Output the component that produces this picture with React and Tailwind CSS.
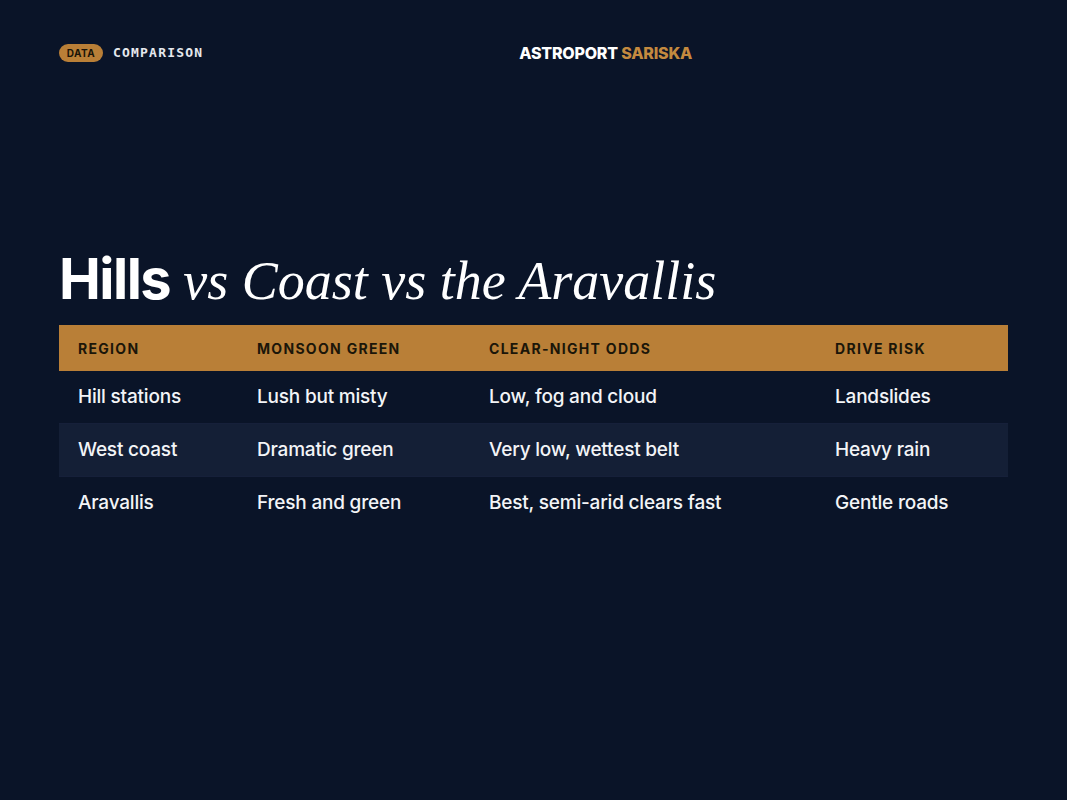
const rows = [
  ["Hill stations", "Lush but misty", "Low, fog and cloud", "Landslides"],
  ["West coast", "Dramatic green", "Very low, wettest belt", "Heavy rain"],
  ["Aravallis", "Fresh and green", "Best, semi-arid clears fast", "Gentle roads"],
];

const App = () => {
  return (
    <div
      className="w-[1067px] h-[800px] bg-[#0a1428] text-white px-[59px] flex flex-col"
      style={{ fontFamily: "Inter, 'Noto Sans', sans-serif" }}
    >
      {/* Top bar */}
      <div className="flex items-center justify-between pt-[41px]">
        <div className="flex items-center gap-[10px]">
          <span className="h-[18px] w-[44px] rounded-full bg-[#b97f37] text-[#1a1408] text-[10px] font-bold tracking-[0.5px] flex items-center justify-center">
            DATA
          </span>
          <span
            className="text-[13px] font-bold tracking-[1.2px] text-[#e6e8ee]"
            style={{ fontFamily: "'DejaVu Sans Mono', 'Liberation Mono', monospace" }}
          >
            COMPARISON
          </span>
        </div>
        <div className="text-[16px] font-extrabold tracking-[-0.2px]">
          ASTROPORT <span className="text-[#c48a3f]">SARISKA</span>
        </div>
        <div />
      </div>

      {/* Title */}
      <h1 className="mt-[186px] flex items-baseline gap-[13px] leading-none">
        <span className="text-[56px] font-bold tracking-[-1.5px]">Hills</span>
        <span
          className="text-[54px] italic"
          style={{ fontFamily: "'Liberation Serif', 'DejaVu Serif', serif" }}
        >
          vs Coast vs the Aravallis
        </span>
      </h1>

      {/* Table */}
      <div className="mt-[17px] w-[949px]">
        <div className="grid grid-cols-[179px_232px_346px_192px] h-[46px] items-center bg-[#b97f37] text-[#1b1609] text-[14px] font-bold tracking-[1.3px]">
          <div className="pl-[19px]">REGION</div>
          <div className="pl-[19px]">MONSOON GREEN</div>
          <div className="pl-[19px]">CLEAR-NIGHT ODDS</div>
          <div className="pl-[19px]">DRIVE RISK</div>
        </div>
        {rows.map((r, i) => (
          <div
            key={i}
            className={`grid grid-cols-[179px_232px_346px_192px] h-[53px] items-center text-[19px] font-medium tracking-[-0.2px] text-[#f3f4f7] ${
              i < rows.length - 1 ? "border-b border-[#16203a]" : ""
            } ${i === 1 ? "bg-[#141f36]" : ""}`}
          >
            {r.map((c, j) => (
              <div key={j} className="pl-[19px]">
                {c}
              </div>
            ))}
          </div>
        ))}
      </div>
    </div>
  );
};

export default App;
